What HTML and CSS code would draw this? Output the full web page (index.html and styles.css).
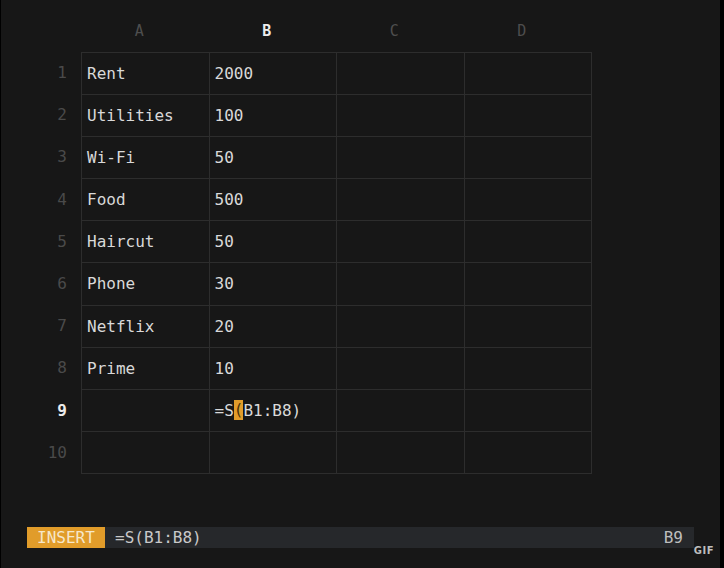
FILE: index.html
```html
<!DOCTYPE html>
<html lang="en">
<head>
    <meta charset="UTF-8">
    <meta name="viewport" content="width=device-width, initial-scale=1.0">
    <title>Sheet</title>
    <link rel="stylesheet" href="styles.css">
</head>
<body>
    <div class="screen">
        <!-- Column headers -->
        <div class="col-heads">
            <div class="col-head">A</div>
            <div class="col-head active">B</div>
            <div class="col-head">C</div>
            <div class="col-head">D</div>
        </div>

        <div class="sheet">
            <!-- Row numbers -->
            <div class="row-labels">
                <div class="row-label">1</div>
                <div class="row-label">2</div>
                <div class="row-label">3</div>
                <div class="row-label">4</div>
                <div class="row-label">5</div>
                <div class="row-label">6</div>
                <div class="row-label">7</div>
                <div class="row-label">8</div>
                <div class="row-label active">9</div>
                <div class="row-label">10</div>
            </div>

            <!-- Cells -->
            <div class="cells">
                <div class="cell">Rent</div><div class="cell">2000</div><div class="cell"></div><div class="cell"></div>
                <div class="cell">Utilities</div><div class="cell">100</div><div class="cell"></div><div class="cell"></div>
                <div class="cell">Wi-Fi</div><div class="cell">50</div><div class="cell"></div><div class="cell"></div>
                <div class="cell">Food</div><div class="cell">500</div><div class="cell"></div><div class="cell"></div>
                <div class="cell">Haircut</div><div class="cell">50</div><div class="cell"></div><div class="cell"></div>
                <div class="cell">Phone</div><div class="cell">30</div><div class="cell"></div><div class="cell"></div>
                <div class="cell">Netflix</div><div class="cell">20</div><div class="cell"></div><div class="cell"></div>
                <div class="cell">Prime</div><div class="cell">10</div><div class="cell"></div><div class="cell"></div>
                <div class="cell"></div><div class="cell">=S<span class="cursor">(</span>B1:B8)</div><div class="cell"></div><div class="cell"></div>
                <div class="cell"></div><div class="cell"></div><div class="cell"></div><div class="cell"></div>
            </div>
        </div>

        <!-- Status line -->
        <div class="statusbar">
            <span class="mode">INSERT</span>
            <span class="formula">=S(B1:B8)</span>
            <span class="cell-ref">B9</span>
        </div>

        <span class="gif-badge">GIF</span>
    </div>
</body>
</html>
```

FILE: styles.css
```css
* {
    margin: 0;
    padding: 0;
    box-sizing: border-box;
}

body {
    background-color: #000;
    font-family: "DejaVu Sans Mono", "Liberation Mono", monospace;
    font-size: 16px;
    color: #d6d6d6;
}

.screen {
    position: relative;
    width: 719px;
    height: 568px;
    margin-left: 1px;
    background-color: #171717;
    display: flex;
    flex-direction: column;
}

/* Column headers */
.col-heads {
    display: grid;
    grid-template-columns: repeat(4, 127.5px);
    margin-left: 80px;
    height: 52px;
    padding-top: 21px;
}

.col-head {
    text-align: center;
    padding-right: 11px;
    line-height: 20px;
    font-size: 15px;
    color: #4e4e4e;
}

.col-head.active {
    color: #ececec;
    font-weight: bold;
}

/* Sheet body */
.sheet {
    display: flex;
}

.row-labels {
    width: 80px;
    display: grid;
    grid-template-rows: repeat(10, 42.2px);
}

.row-label {
    text-align: right;
    padding-right: 14px;
    line-height: 42.2px;
    color: #4a4a4a;
}

.row-label.active {
    color: #ececec;
    font-weight: bold;
}

.cells {
    display: grid;
    grid-template-columns: repeat(4, 126.5px);
    grid-template-rows: repeat(10, 41.1px);
    gap: 1px;
    padding: 1px;
    background-color: #2d2d2d;
}

.cell {
    background-color: #171717;
    padding-left: 5px;
    line-height: 41.1px;
    white-space: nowrap;
    color: #d9d9d9;
}

.cursor {
    display: inline-block;
    line-height: 20px;
    background-color: #e19c2a;
    color: #4a3208;
    vertical-align: middle;
    margin-top: -3px;
}

/* Status line */
.statusbar {
    margin-top: auto;
    margin-bottom: 20px;
    margin-left: 26px;
    width: 667px;
    height: 21px;
    display: flex;
    background-color: #26282b;
    line-height: 21px;
    color: #c9c9c9;
}

.mode {
    background-color: #e19c2a;
    color: #f6e7c9;
    padding: 0 10px;
    width: 78px;
}

.formula {
    padding-left: 10px;
}

.cell-ref {
    margin-left: auto;
    padding-right: 11px;
    color: #bdbdbd;
}

.gif-badge {
    position: absolute;
    right: 6px;
    bottom: 12px;
    font-family: "DejaVu Sans", sans-serif;
    font-size: 10px;
    font-weight: bold;
    color: #bdbdbd;
    letter-spacing: 0.5px;
}
```
